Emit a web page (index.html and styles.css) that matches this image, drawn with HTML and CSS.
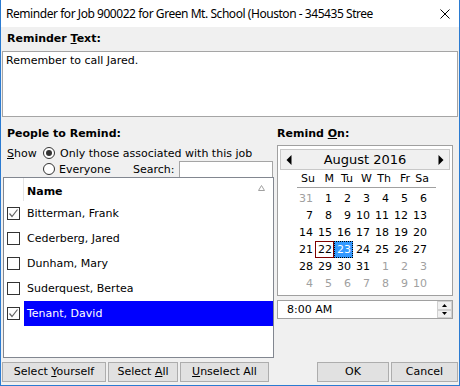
FILE: index.html
```html
<!DOCTYPE html>
<html>
<head>
<meta charset="utf-8">
<link rel="stylesheet" href="styles.css">
</head>
<body>
<div class="window">
  <div class="titlebar">
    <span class="title">Reminder for Job 900022 for Green Mt. School (Houston - 345435 Stree</span>
    <span class="close"><svg width="10" height="10" viewBox="0 0 10 10"><path d="M0.5 0.5 L9.5 9.5 M9.5 0.5 L0.5 9.5" stroke="#000" stroke-width="1" fill="none"/></svg></span>
  </div>
  <div class="client">
    <div class="label bold">Reminder <u>T</u>ext:</div>
    <div class="textbox">Remember to call Jared.</div>
    <div class="columns">
      <div class="left">
        <div class="heading bold">People to Remind:</div>
        <div class="showrow">
          <span class="showlbl"><u>S</u>how</span>
          <span class="radio checked"></span>
          <span>Only those associated with this job</span>
        </div>
        <div class="everyrow">
          <span class="radio"></span>
          <span class="everyone">Everyone</span>
          <span class="searchlbl">Search:</span>
          <span class="search"></span>
        </div>
        <div class="list">
          <div class="lhead">
            <div class="lcheck"></div>
            <div class="lname bold">Name</div>
            <svg class="sort" width="7" height="6" viewBox="0 0 7 6"><path d="M3.5 0.5 L6.5 5.5 L0.5 5.5 Z" fill="none" stroke="#a0a0a0" stroke-width="1"/></svg>
          </div>
          <div class="lrow"><div class="lcheck"><span class="cb on"><svg width="11" height="11" viewBox="0 0 11 11"><path d="M1.5 5.5 L4 8.5 L9.5 1.5" fill="none" stroke="#666" stroke-width="1.2"/></svg></span></div><div class="lname">Bitterman, Frank</div></div>
          <div class="lrow"><div class="lcheck"><span class="cb"></span></div><div class="lname">Cederberg, Jared</div></div>
          <div class="lrow"><div class="lcheck"><span class="cb"></span></div><div class="lname">Dunham, Mary</div></div>
          <div class="lrow"><div class="lcheck"><span class="cb"></span></div><div class="lname">Suderquest, Bertea</div></div>
          <div class="lrow"><div class="lcheck"><span class="cb on"><svg width="11" height="11" viewBox="0 0 11 11"><path d="M1.5 5.5 L4 8.5 L9.5 1.5" fill="none" stroke="#666" stroke-width="1.2"/></svg></span></div><div class="lname sel">Tenant, David</div></div>
        </div>
      </div>
      <div class="right">
        <div class="heading2 bold">Remind <u>O</u>n:</div>
        <div class="calendar">
          <div class="calhead">
            <svg class="arrow" width="6" height="10" viewBox="0 0 6 10"><path d="M5.5 0 L5.5 10 L0.5 5 Z" fill="#000"/></svg>
            <span class="month">August 2016</span>
            <svg class="arrow" width="6" height="10" viewBox="0 0 6 10"><path d="M0.5 0 L0.5 10 L5.5 5 Z" fill="#000"/></svg>
          </div>
          <div class="daynames">
            <span>Su</span><span>M</span><span>Tu</span><span>W</span><span>Th</span><span>Fr</span><span>Sa</span>
          </div>
          <div class="days">
            <span class="dim">31</span><span>1</span><span>2</span><span>3</span><span>4</span><span>5</span><span>6</span>
            <span>7</span><span>8</span><span>9</span><span>10</span><span>11</span><span>12</span><span>13</span>
            <span>14</span><span>15</span><span>16</span><span>17</span><span>18</span><span>19</span><span>20</span>
            <span>21</span><span class="today">22</span><span class="picked">23</span><span>24</span><span>25</span><span>26</span><span>27</span>
            <span>28</span><span>29</span><span>30</span><span>31</span><span class="dim">1</span><span class="dim">2</span><span class="dim">3</span>
            <span class="dim">4</span><span class="dim">5</span><span class="dim">6</span><span class="dim">7</span><span class="dim">8</span><span class="dim">9</span><span class="dim">10</span>
          </div>
        </div>
        <div class="timebox">
          <span class="time">8:00 AM</span>
          <div class="spin">
            <div class="spinbtn"><svg width="5" height="3" viewBox="0 0 5 3"><path d="M2.5 0 L5 3 L0 3 Z" fill="#000"/></svg></div>
            <div class="spinbtn"><svg width="5" height="3" viewBox="0 0 5 3"><path d="M0 0 L5 0 L2.5 3 Z" fill="#000"/></svg></div>
          </div>
        </div>
      </div>
    </div>
    <div class="buttons">
      <div class="btn b1"><span>Select <u>Y</u>ourself</span></div>
      <div class="btn b2"><span>Select <u>A</u>ll</span></div>
      <div class="btn b3"><span><u>U</u>nselect All</span></div>
      <div class="spacer"></div>
      <div class="btn b4"><span>OK</span></div>
      <div class="btn b5"><span>Cancel</span></div>
    </div>
  </div>
</div>
</body>
</html>
```
FILE: styles.css
```css
html, body { margin: 0; padding: 0; background: #fff; }
.window {
  width: 460px; height: 386px; box-sizing: border-box;
  border: 1px solid #2b7bd1; border-top: none;
  display: flex; flex-direction: column;
  background: #f0f0f0;
  font-family: "DejaVu Sans", sans-serif; font-size: 11px; color: #000;
  overflow: hidden;
}
.bold { font-weight: bold; }
u { text-decoration: underline; text-underline-offset: 1px; }
.titlebar {
  height: 27px; background: #fff; display: flex; align-items: center;
  padding-left: 5px; flex: none;
}
.title { font-family: "Noto Sans", sans-serif; font-size: 12px; white-space: nowrap; flex: 1; overflow: hidden; letter-spacing: -0.45px; }
.close { width: 10px; height: 10px; margin-right: 9px; margin-top: 0px; display: flex; }
.client { flex: 1; display: flex; flex-direction: column; }
.label { margin: 5px 0 0 6px; height: 14px; line-height: 14px; }
.textbox {
  margin: 5px 0 0 1px; width: 456px; height: 66px; box-sizing: border-box;
  border: 1px solid #a5a5a5; background: #fff; padding: 2px 3px; line-height: 14px;
}
.columns { display: flex; gap: 3px; margin-left: 2px; }
.left { width: 271px; display: flex; flex-direction: column; }
.heading { margin-top: 10px; height: 14px; line-height: 14px; padding-left: 4px; }
.heading2 { margin-top: 10px; height: 14px; line-height: 14px; }
.showrow, .everyrow { display: flex; align-items: center; height: 16px; }
.showrow { margin-top: 4px; }
.showlbl { padding-left: 4px; width: 36px; }
.radio {
  width: 12px; height: 12px; border: 1px solid #333; border-radius: 50%;
  background: #fff; box-sizing: border-box; margin-right: 5px; flex: none;
  display: flex; align-items: center; justify-content: center;
}
.everyrow .radio { margin-left: 40px; margin-right: 4px; }
.radio.checked::after { content: ""; width: 6px; height: 6px; border-radius: 50%; background: #333; }
.everyone { width: 74px; }
.searchlbl { width: 46px; }
.search { width: 94px; height: 16px; box-sizing: border-box; border: 1px solid #a5a5a5; border-bottom: none; background: #fff; align-self: flex-end; }
.list {
  height: 181px; box-sizing: border-box; border: 1px solid #828790; background: #fff;
}
.lhead { display: flex; height: 23px; position: relative; }
.lhead .lcheck { border-right: 1px solid #e5e5e5; width: 19px; }
.lhead .lname { padding-top: 7px; line-height: 14px; }
.sort { position: absolute; left: 254px; top: 7px; }
.lrow { display: flex; height: 25px; }
.lcheck { width: 20px; flex: none; display: flex; align-items: center; }
.lname { flex: 1; padding-left: 3px; line-height: 25px; white-space: nowrap; }
.lname.sel { background: #0000ff; color: #fff; }
.cb {
  width: 13px; height: 13px; box-sizing: border-box; border: 1px solid #333;
  background: #fff; margin-left: 3px; display: flex; align-items: center; justify-content: center;
}
.right { width: 176px; display: flex; flex-direction: column; }
.calendar {
  margin-top: 4px; height: 151px; box-sizing: border-box;
  border: 1px solid #a0a0a0; background: #fff; padding: 3px 2px 0 2px;
}
.calhead {
  height: 21px; box-sizing: border-box; border: 1px solid #c8c8c8; background: #f0f0f0;
  display: flex; align-items: center; justify-content: space-between; padding: 0 5px 0 5px;
}
.month { font-size: 13px; }
.daynames {
  margin: 1px 0 0 17px; width: 139px; height: 16px; border-bottom: 1px solid #a0a0a0;
  display: grid; grid-template-columns: repeat(7, 19px); line-height: 16px;
}
.daynames span { text-align: right; padding-right: 1px; }
.days {
  margin: 2px 0 0 16px; display: grid; grid-template-columns: repeat(7, 19px);
  grid-auto-rows: 17px; line-height: 17px;
}
.days span { text-align: right; padding-right: 2px; box-sizing: border-box; }
.days .dim { color: #a0a0a0; }
.days .today { border: 1px solid #800000; line-height: 15px; padding-right: 1px; }
.days .picked { background: #3399ff; color: #fff; outline: 1px dotted #000; outline-offset: -1px; }
.timebox {
  margin-top: 4px; height: 19px; box-sizing: border-box; border: 1px solid #a0a0a0;
  background: #fff; display: flex; align-items: center;
}
.time { flex: 1; padding-left: 9px; }
.spin { width: 15px; height: 17px; display: flex; flex-direction: column; margin-right: 0; }
.spinbtn {
  flex: 1; background: #f0f0f0; border: 1px solid #d0d0d0; box-sizing: border-box;
  display: flex; align-items: center; justify-content: center;
}
.buttons { display: flex; margin-top: 4px; height: 20px; padding-left: 1px; }
.btn {
  height: 20px; box-sizing: border-box; border: 1px solid #adadad; background: #e1e1e1;
  display: flex; align-items: center; justify-content: center; line-height: 14px;
}
.b1 { width: 104px; }
.b2 { width: 70px; margin-left: 2px; }
.b3 { width: 89px; margin-left: 2px; }
.spacer { flex: 1; }
.b4 { width: 72px; }
.b5 { width: 67px; margin-left: 2px; margin-right: 1px; }
```
